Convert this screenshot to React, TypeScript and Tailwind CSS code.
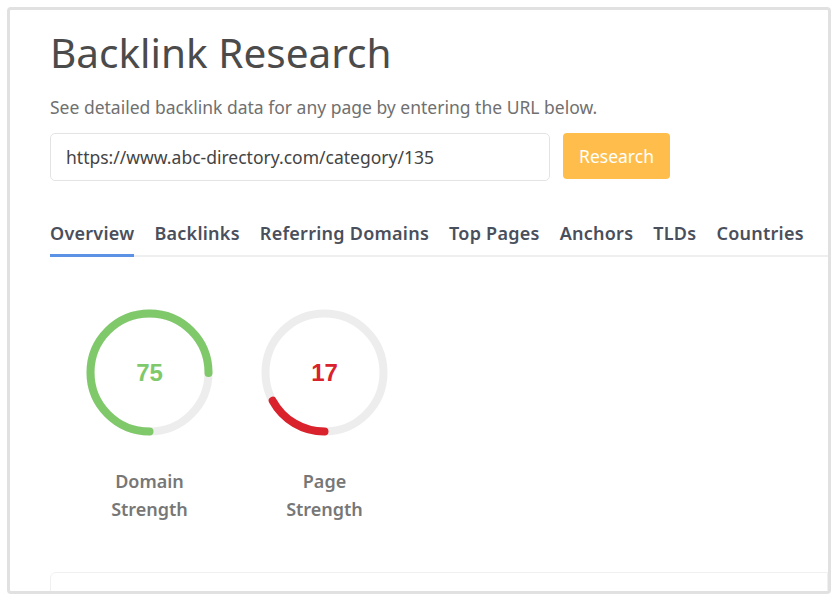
import React from 'react';

const Gauge = ({ value, color }: { value: number; color: string }) => {
  const r = 59;
  const c = 2 * Math.PI * r;
  return (
    <svg width="127" height="127" viewBox="0 0 127 127">
      <circle cx="63.5" cy="63.5" r={r} fill="none" stroke="#ededed" strokeWidth="8" />
      <circle
        cx="63.5"
        cy="63.5"
        r={r}
        fill="none"
        stroke={color}
        strokeWidth="8"
        strokeLinecap="round"
        strokeDasharray={`${(c * value) / 100} ${c}`}
        transform="rotate(90 63.5 63.5)"
      />
    </svg>
  );
};

const tabs = ['Overview', 'Backlinks', 'Referring Domains', 'Top Pages', 'Anchors', 'TLDs', 'Countries'];

export default function App() {
  return (
    <div className="w-[838px] h-[601px] bg-white p-[7px] font-['Noto_Sans',sans-serif]">
      <div className="h-[587px] border-[3px] border-[#e1e1e1] rounded-[4px] overflow-hidden bg-white pl-[40px] pt-[19px]">
        <h1 className="text-[40.5px] leading-[48px] text-[#4b4b4b] font-normal">Backlink Research</h1>
        <p className="mt-[18px] text-[17.5px] leading-[24px] text-[#707070]">
          See detailed backlink data for any page by entering the URL below.
        </p>
        <div className="mt-[14px] flex gap-[13px]">
          <div className="w-[500px] h-[48px] border border-[#e3e3e3] rounded-[5px] flex items-center pl-[15px] text-[17.5px] text-[#444]">
            https://www.abc-directory.com/category/135
          </div>
          <button className="w-[107px] h-[46px] bg-[#ffbe4c] rounded-[4px] text-white text-[17.5px]">Research</button>
        </div>
        <div className="mt-[40px] flex gap-[20px] border-b-2 border-[#efefef]">
          {tabs.map((t, i) => (
            <div
              key={t}
              className={`pb-[9px] text-[18px] leading-[24px] font-semibold text-[#4a4f5c] tracking-[0.25px] ${
                i === 0 ? 'border-b-[3px] border-[#5c92e6] -mb-[2px]' : ''
              }`}
            >
              {t}
            </div>
          ))}
        </div>
        <div className="mt-[52px] ml-[36px] flex gap-[48px]">
          <div className="w-[127px] flex flex-col items-center">
            <div className="relative">
              <Gauge value={75} color="#7fc96b" />
              <span className="absolute inset-0 flex items-center justify-center font-['Liberation_Sans',sans-serif] font-bold text-[24px] text-[#7fc96b]">
                75
              </span>
            </div>
            <div className="mt-[31px] w-[100px] text-center text-[18px] leading-[28px] font-semibold text-[#777]">Domain Strength</div>
          </div>
          <div className="w-[127px] flex flex-col items-center">
            <div className="relative">
              <Gauge value={17} color="#d9222c" />
              <span className="absolute inset-0 flex items-center justify-center font-['Liberation_Sans',sans-serif] font-bold text-[24px] text-[#d9222c]">
                17
              </span>
            </div>
            <div className="mt-[31px] w-[100px] text-center text-[18px] leading-[28px] font-semibold text-[#777]">Page Strength</div>
          </div>
        </div>
        <div className="mt-[49px] h-[40px] border border-[#f0f0f0] rounded-tl-[6px]" />
      </div>
    </div>
  );
}
